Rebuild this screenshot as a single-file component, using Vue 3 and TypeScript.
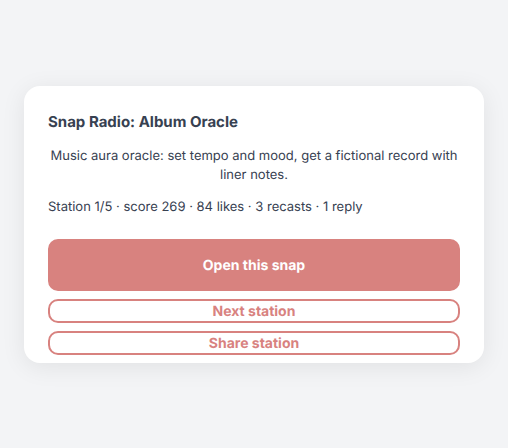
<script setup lang="ts">
interface Station {
  title: string
  description: string
  position: number
  total: number
  score: number
  likes: number
  recasts: number
  replies: number
}

const station: Station = {
  title: 'Snap Radio: Album Oracle',
  description: 'Music aura oracle: set tempo and mood, get a fictional record with liner notes.',
  position: 1,
  total: 5,
  score: 269,
  likes: 84,
  recasts: 3,
  replies: 1,
}

const stats = [
  `Station ${station.position}/${station.total}`,
  `score ${station.score}`,
  `${station.likes} likes`,
  `${station.recasts} recasts`,
  `${station.replies} ${station.replies === 1 ? 'reply' : 'replies'}`,
].join(' · ')
</script>

<template>
  <main class="page">
    <article class="card">
      <h1 class="title">{{ station.title }}</h1>
      <p class="description">{{ station.description }}</p>
      <p class="stats">{{ stats }}</p>
      <div class="actions">
        <button type="button" class="button primary">Open this snap</button>
        <button type="button" class="button secondary">Next station</button>
        <button type="button" class="button secondary">Share station</button>
      </div>
    </article>
  </main>
</template>

<style>
body {
  margin: 0;
  background: #f3f4f6;
}
</style>

<style scoped>
.page {
  display: flex;
  align-items: center;
  justify-content: center;
  box-sizing: border-box;
  min-height: 100vh;
  padding: 24px;
  font-family: Inter, sans-serif;
  color: #374151;
  text-rendering: geometricPrecision;
}

.card {
  box-sizing: border-box;
  width: 100%;
  padding: 24px 24px 8px;
  border-radius: 16px;
  background: #ffffff;
  box-shadow: 0 4px 24px rgba(0, 0, 0, 0.08);
}

.title {
  margin: 0;
  font-size: 15px;
  font-weight: 700;
  line-height: 24px;
}

.description {
  margin: 13px 0;
  font-size: 13px;
  line-height: 19px;
  text-align: center;
}

.stats {
  margin: 0;
  font-size: 13px;
  line-height: 19px;
}

.actions {
  display: flex;
  flex-direction: column;
  gap: 8px;
  margin-top: 22px;
}

.button {
  box-sizing: border-box;
  width: 100%;
  padding: 1px 0 0;
  border: 2px solid #d8827f;
  border-radius: 10px;
  font-family: inherit;
  font-size: 14px;
  font-weight: 700;
  line-height: 19px;
  text-rendering: inherit;
  cursor: pointer;
}

.primary {
  padding: 15px 14px 14px;
  background: #d8827f;
  color: #ffffff;
}

.secondary {
  background: #ffffff;
  color: #d8827f;
}
</style>
